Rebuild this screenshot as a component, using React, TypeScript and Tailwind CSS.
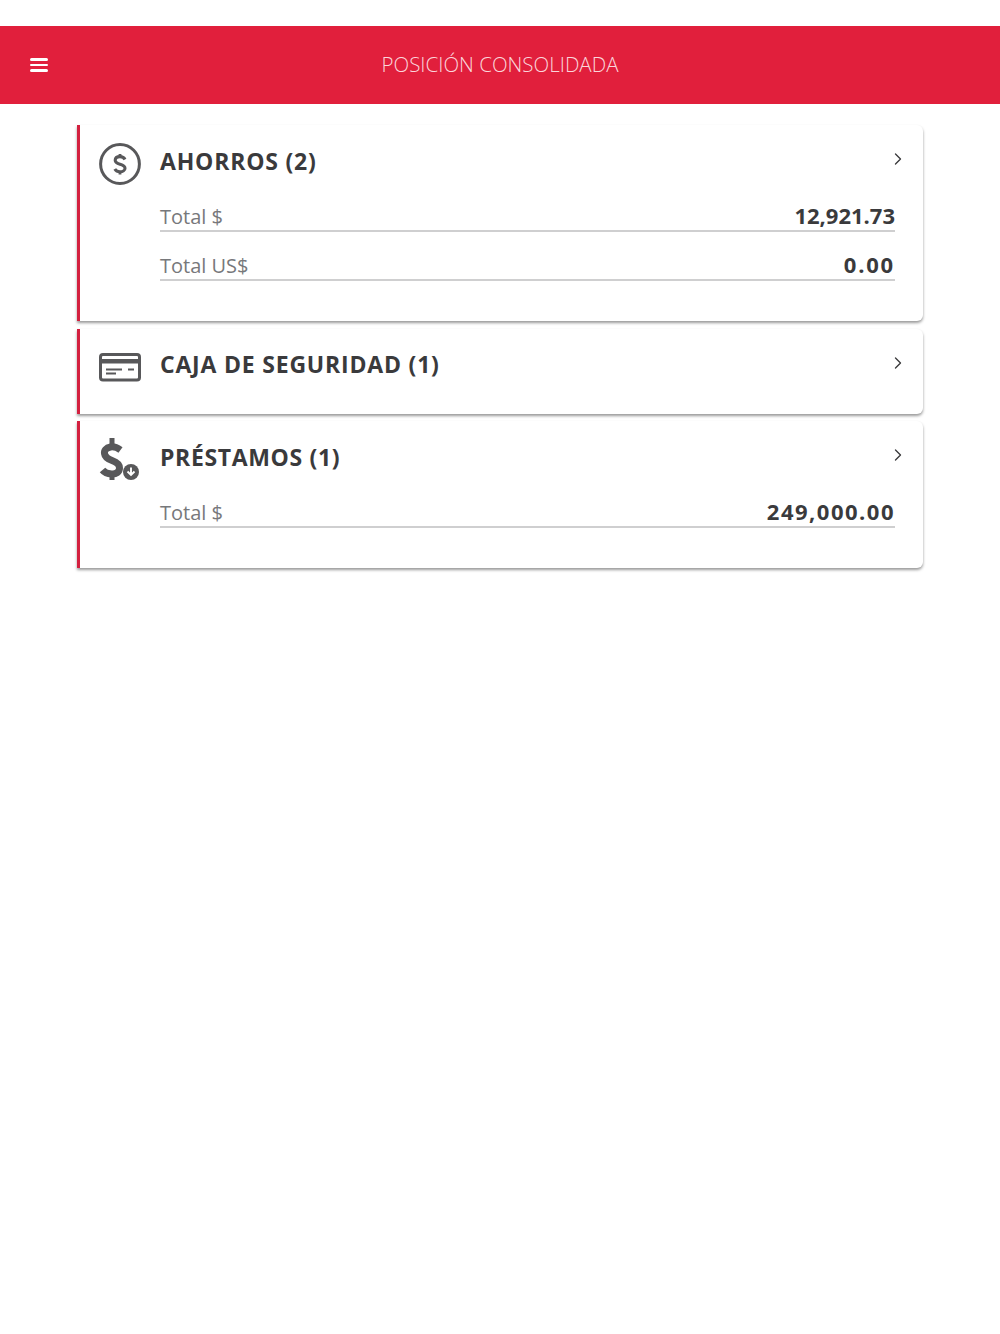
import { ChevronRight } from "lucide-react";

function DollarCircleIcon() {
  return (
    <svg width="44" height="44" viewBox="0 0 44 44" fill="none">
      <circle cx="21" cy="22" r="19.4" stroke="#58585a" strokeWidth="3" />
      <path d="M26 17.5C25 15.5 23 14.6 21 14.6C18 14.6 16.2 16.2 16.2 18.3C16.2 20.6 18.4 21.5 21 22.2C23.8 23 26 24 26 26.2C26 28.4 23.8 29.8 21 29.8C18.8 29.8 16.8 28.8 15.8 27" stroke="#58585a" strokeWidth="3.1" />
      <path d="M21 12v3M21 29.5v3" stroke="#58585a" strokeWidth="2.8" />
    </svg>
  );
}

function CardIcon() {
  return (
    <svg width="44" height="30" viewBox="0 0 44 30" fill="none">
      <rect x="1.5" y="1.5" width="39" height="25.6" rx="2.5" stroke="#58585a" strokeWidth="3" />
      <rect x="1" y="6" width="40" height="4.5" fill="#58585a" />
      <rect x="7" y="15.5" width="16" height="2" fill="#58585a" />
      <rect x="7" y="19.5" width="10" height="2" fill="#58585a" />
      <rect x="29" y="15.5" width="6" height="2" fill="#58585a" />
    </svg>
  );
}

function LoanIcon() {
  return (
    <svg width="44" height="46" viewBox="0 0 44 46" fill="none">
      <path d="M21.5 13C18 10.5 14.5 9.5 11.5 10C7 10.8 5 13.5 5.5 16.5C6 20.5 9 22 13 23.5C18 25.3 20.5 27.5 20.5 31C20.5 35 17 37.5 12.5 37C9 36.8 5.5 35.5 3.5 33" stroke="#58585a" strokeWidth="7" />
      <path d="M13 1v8M13 37v6" stroke="#58585a" strokeWidth="5" />
      <circle cx="32" cy="35" r="8" fill="#58585a" />
      <path d="M32 30.5v7.5M28.5 34.5l3.5 3.5 3.5-3.5" stroke="#ffffff" strokeWidth="1.9" />
    </svg>
  );
}

type RowData = { label: string; value: string; valueClass: string };

function Row({ label, value, valueClass }: RowData) {
  return (
    <div className="flex h-[32px] items-end justify-between border-b-2 border-[#cfcfd0] text-[20px] leading-[30px]">
      <span className="leading-[26px] font-normal text-[#77787b]">{label}</span>
      <span className={`text-[22px] font-bold text-[#3a3a3c] ${valueClass}`}>{value}</span>
    </div>
  );
}

function Card({ title, titleClass, icon, iconClass, rows, className }: { title: string; titleClass: string; icon: React.ReactNode; iconClass: string; rows?: RowData[]; className: string }) {
  return (
    <div className={`relative flex rounded-r-md border-l-[3px] border-[#d3203f] bg-white pl-[19px] shadow-[0_2px_3px_rgba(0,0,0,0.4)] ${className}`}>
      <div className={`w-[61px] shrink-0 ${iconClass}`}>{icon}</div>
      <div className="mr-[28px] flex-1">
        <div className="flex h-[75px] items-start justify-between">
          <h2 className={`text-[23px] leading-[34px] font-bold tracking-[0.8px] text-[#3a3a3c] ${titleClass}`}>{title}</h2>
          <ChevronRight size={20} strokeWidth={1.6} className="mt-[24px] -mr-[13px] text-[#3a3a3c]" />
        </div>
        <div className="flex flex-col gap-[17px]">
          {rows?.map((r) => <Row key={r.label} {...r} />)}
        </div>
      </div>
    </div>
  );
}

export default function App() {
  return (
    <div className="min-h-[1334px] bg-white pt-[26px] font-['Open_Sans',sans-serif]">
      <header className="relative flex h-[78px] items-center justify-center bg-[#e11f3c]">
        <button className="absolute left-[30px] flex flex-col gap-[3px]">
          <span className="h-[2.5px] w-[18px] rounded-sm bg-white" />
          <span className="h-[2.5px] w-[18px] rounded-sm bg-white" />
          <span className="h-[2.5px] w-[18px] rounded-sm bg-white" />
        </button>
        <h1 className="-mt-[2px] text-[20.5px] font-light text-[#fbd5da]">POSICIÓN CONSOLIDADA</h1>
      </header>
      <main className="flex flex-col px-[77px] pt-[21px]">
        <Card
          title="AHORROS (2)"
          titleClass="pt-[19px]"
          icon={<DollarCircleIcon />}
          iconClass="pt-[17px]"
          className="mb-[8px] h-[196px]"
          rows={[
            { label: "Total $", value: "12,921.73", valueClass: "tracking-[0px]" },
            { label: "Total US$", value: "0.00", valueClass: "tracking-[1.8px]" },
          ]}
        />
        <Card title="CAJA DE SEGURIDAD (1)" titleClass="pt-[18px]" icon={<CardIcon />} iconClass="pt-[24px]" className="mb-[7px] h-[85px]" />
        <Card
          title="PRÉSTAMOS (1)"
          titleClass="pt-[19px] tracking-[0.65px]"
          icon={<LoanIcon />}
          iconClass="pt-[16px]"
          className="h-[147px]"
          rows={[{ label: "Total $", value: "249,000.00", valueClass: "tracking-[1.5px]" }]}
        />
      </main>
    </div>
  );
}
